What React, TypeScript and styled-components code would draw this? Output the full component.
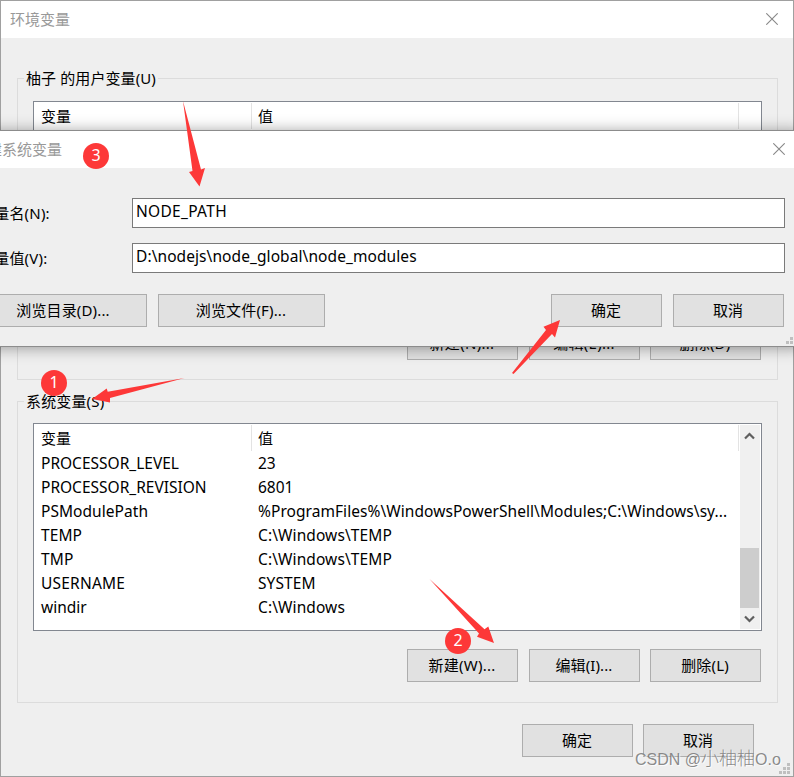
import React from "react";
import styled, { createGlobalStyle } from "styled-components";

const GlobalStyle = createGlobalStyle`
  * { box-sizing: border-box; }
  body {
    margin: 0;
    overflow: hidden;
    color: #000;
    font: 15px/20px "Noto Sans", "Noto Sans CJK SC", sans-serif;
  }
`;

const Desktop = styled.main`
  position: relative;
  width: 794px;
  height: 777px;
  overflow: hidden;
  background: #efefef;
`;

const Window = styled.section`
  display: flex;
  flex-direction: column;
  width: 794px;
  height: 777px;
  border: 1px solid #a0a0a0;
  background: #efefef;
`;

const Dialog = styled(Window)`
  position: absolute;
  left: -38px;
  top: 130px;
  width: 840px;
  height: 217px;
  border-color: #8c8c8c;
  box-shadow: 0 1px 14px rgba(0, 0, 0, 0.38);
`;

const TitleBar = styled.header<{ $end: number }>`
  display: flex;
  flex: none;
  align-items: center;
  justify-content: space-between;
  height: 37px;
  padding: 0 ${(p) => p.$end}px 1px 9px;
  background: #fff;
  color: #999;
`;

const Glyph = styled.svg`
  display: block;
  flex: none;
`;

const Text = styled.span<{ $gap?: number }>`
  letter-spacing: ${(p) => p.$gap ?? 0}px;
  white-space: pre;
`;

const Latin = styled(Text)`
  font-size: 15.5px;
`;

const Content = styled.div`
  display: flex;
  flex-direction: column;
  padding: 40px 15px 0 16px;
`;

const Group = styled.div<{ $listTop: number; $bottom: number }>`
  display: flex;
  flex-direction: column;
  height: 302px;
  margin: 0 0 21px;
  padding: 0 15px ${(p) => p.$bottom}px;
  padding-right: 16px;
  border: 1px solid #dcdcdc;

  & > :first-child {
    margin-bottom: ${(p) => p.$listTop}px;
  }
`;

const Legend = styled.div`
  align-self: flex-start;
  flex: none;
  height: 20px;
  margin: -11px 0 0 -9px;
  padding: 0 2px;
  background: #efefef;
`;

const ListBox = styled.div`
  display: flex;
  flex: none;
  width: 729px;
  height: 208px;
  padding: 1px;
  border: 1px solid #828790;
  background: #fff;
`;

const Columns = styled.div`
  display: flex;
  flex-direction: column;
  width: 705px;
`;

const HeadRow = styled.div`
  display: grid;
  flex: none;
  grid-template-columns: 217px 487px;
  height: 26px;
`;

const HeadCell = styled.div`
  padding: 3px 0 0 6px;
  border-right: 1px solid #e3e3e3;
`;

const Row = styled.div`
  display: grid;
  grid-template-columns: 217px 488px;
  flex: none;
  height: 24px;
  padding: 2px 0 0 6px;
`;

const ScrollBar = styled.div`
  display: flex;
  flex-direction: column;
  align-items: center;
  width: 20px;
  padding: 7px 1px 6px 0;
  background: #f0f0f0;
`;

const Thumb = styled.div`
  width: 19px;
  height: 60px;
  margin: auto 0 7px;
  background: #cdcdcd;
`;

const Actions = styled.div`
  display: flex;
  justify-content: flex-end;
  margin-top: auto;
`;

const Footer = styled(Actions)`
  margin-top: 0;
  padding-right: 24px;
`;

const Button = styled.button<{ $width?: number; $gap?: number; $track?: number }>`
  display: flex;
  flex: none;
  align-items: center;
  justify-content: center;
  width: ${(p) => p.$width ?? 111}px;
  height: 33px;
  margin: 0 0 0 ${(p) => p.$gap ?? 10}px;
  padding: 0 1px 2px 0;
  border: 1px solid #adadad;
  background: #e1e1e1;
  color: #000;
  font: inherit;
  letter-spacing: ${(p) => p.$track ?? 0}px;
`;

const Form = styled.div`
  display: grid;
  row-gap: 15px;
  padding: 30px 0 0 16px;
`;

const Field = styled.label`
  display: grid;
  grid-template-columns: 153px 653px;
  align-items: center;
  height: 30px;
`;

const Input = styled.div`
  height: 30px;
  padding: 2px 3px 0;
  border: 1px solid #7a7a7a;
  background: #fff;
`;

const DialogActions = styled.div`
  display: flex;
  padding: 21px 0 0 17px;
`;

const Spacer = styled.div`
  width: 215px;
`;

const Grip = styled(Glyph)<{ $right: number; $bottom: number }>`
  position: absolute;
  right: ${(p) => p.$right}px;
  bottom: ${(p) => p.$bottom}px;
`;

const Marks = styled.svg`
  position: absolute;
  inset: 0;
  pointer-events: none;
`;

const Badge = styled.div<{ $x: number; $y: number }>`
  position: absolute;
  left: ${(p) => p.$x}px;
  top: ${(p) => p.$y}px;
  width: 26px;
  height: 26px;
  border-radius: 50%;
  background: #fd3838;
  color: #fff;
  font-size: 16px;
  line-height: 24px;
  text-align: center;
`;

const Watermark = styled.div`
  position: absolute;
  left: 635px;
  top: 746px;
  color: rgba(110, 110, 110, 0.8);
  font: 300 16px/26px "Liberation Sans", "Noto Sans CJK SC", sans-serif;
  text-shadow: 1px 1px 1px rgba(255, 255, 255, 0.9);
  white-space: nowrap;
`;

const Author = styled.span`
  font-size: 18px;
`;

const CloseIcon = () => (
  <Glyph width="12" height="12" viewBox="0 0 12 12">
    <path d="M.3 .3 11.7 11.7M11.700 .3 .3 11.700" stroke="#888" strokeWidth="1.1" />
  </Glyph>
);

const Chevron = ({ down = false }: { down?: boolean }) => (
  <Glyph width="11" height="8" viewBox="0 0 11 8">
    <path
      d={down ? "M1 1.5 5.5 6 10 1.5" : "M1 6.5 5.5 2 10 6.5"}
      fill="none"
      stroke="#5f5f5f"
      strokeWidth="2.2"
    />
  </Glyph>
);

const SizeGrip = ({ right, bottom }: { right: number; bottom: number }) => (
  <Grip $right={right} $bottom={bottom} width="11" height="11" viewBox="0 0 11 11">
    <path d="M8 0h3v3H8zM4 4h3v3H4zM8 4h3v3H8zM0 8h3v3H0zM4 8h3v3H4zM8 8h3v3H8z" fill="#bfbfbf" />
  </Grip>
);

const variables: [string, string, number, number][] = [
  ["PROCESSOR_LEVEL", "23", 0, 0],
  ["PROCESSOR_REVISION", "6801", 0, 0],
  ["PSModulePath", "%ProgramFiles%\\WindowsPowerShell\\Modules;C:\\Windows\\sy...", 0.05, 0.06],
  ["TEMP", "C:\\Windows\\TEMP", 0.1, 0.1],
  ["TMP", "C:\\Windows\\TEMP", 0.2, 0.1],
  ["USERNAME", "SYSTEM", 0.2, 0.1],
  ["windir", "C:\\Windows", 0, 0.1],
];

const ListHeader = () => (
  <HeadRow>
    <HeadCell>变量</HeadCell>
    <HeadCell>值</HeadCell>
  </HeadRow>
);

const badges = [
  { label: "1", x: 41, y: 370 },
  { label: "2", x: 445, y: 628 },
  { label: "3", x: 83, y: 143 },
];

export default function App() {
  return (
    <>
      <GlobalStyle />
      <Desktop>
        <Window>
          <TitleBar $end={15}>
            <Text>环境变量</Text>
            <CloseIcon />
          </TitleBar>
          <Content>
            <Group $listTop={13} $bottom={19}>
              <Legend>
                <Text $gap={0.1}>柚子 的用户变量(U)</Text>
              </Legend>
              <ListBox>
                <Columns>
                  <ListHeader />
                </Columns>
              </ListBox>
              <Actions>
                <Button $track={0.3}>新建(N)...</Button>
                <Button $gap={11} $track={0.25}>编辑(E)...</Button>
                <Button $track={0.2}>删除(D)</Button>
              </Actions>
            </Group>
            <Group $listTop={12} $bottom={20}>
              <Legend>
                <Text $gap={0.15}>系统变量(S)</Text>
              </Legend>
              <ListBox>
                <Columns>
                  <ListHeader />
                  {variables.map(([name, value, a, b]) => (
                    <Row key={name}>
                      <Latin $gap={a}>{name}</Latin>
                      <Latin $gap={b}>{value}</Latin>
                    </Row>
                  ))}
                </Columns>
                <ScrollBar>
                  <Chevron />
                  <Thumb />
                  <Chevron down />
                </ScrollBar>
              </ListBox>
              <Actions>
                <Button $track={0.25}>新建(W)...</Button>
                <Button $gap={11} $track={0.1}>编辑(I)...</Button>
                <Button $track={0.15}>删除(L)</Button>
              </Actions>
            </Group>
            <Footer>
              <Button>确定</Button>
              <Button>取消</Button>
            </Footer>
          </Content>
          <SizeGrip right={4} bottom={3} />
        </Window>
        <Dialog>
          <TitleBar $end={16}>
            <Text>新建系统变量</Text>
            <CloseIcon />
          </TitleBar>
          <Form>
            <Field>
              <Text $gap={0.2}>变量名(N):</Text>
              <Input>
                <Latin $gap={0.3}>NODE_PATH</Latin>
              </Input>
            </Field>
            <Field>
              <Text $gap={0.2}>变量值(V):</Text>
              <Input>
                <Latin $gap={0.08}>{"D:\\nodejs\\node_global\\node_modules"}</Latin>
              </Input>
            </Field>
          </Form>
          <DialogActions>
            <Button $width={167} $gap={0} $track={0.15}>浏览目录(D)...</Button>
            <Button $width={167} $gap={11} $track={0.15}>浏览文件(F)...</Button>
            <Spacer />
            <Button $gap={11}>确定</Button>
            <Button $gap={11}>取消</Button>
          </DialogActions>
          <SizeGrip right={4} bottom={2} />
        </Dialog>
        <Marks width="794" height="777" viewBox="0 0 794 777" fill="#fd3838">
          <path d="M183 101 201 169.500 205 168 199.500 186.500 189 172 192.500 171Z" />
          <path d="M184.500 378 107.700 391.700 106.700 388.500 92 399 110 402.600 110 398Z" />
          <path d="M512 373 546 330 543.500 326.700 560 320 555 337.500 552 334 513.500 374Z" />
          <path d="M429.500 579 484.500 629.300 488.300 626.500 494 643 477 636.700 479 633.500Z" />
        </Marks>
        {badges.map((b) => (
          <Badge key={b.label} $x={b.x} $y={b.y}>
            {b.label}
          </Badge>
        ))}
        <Watermark>
          CSDN @<Author>小柚柚</Author>O.o
        </Watermark>
      </Desktop>
    </>
  );
}
